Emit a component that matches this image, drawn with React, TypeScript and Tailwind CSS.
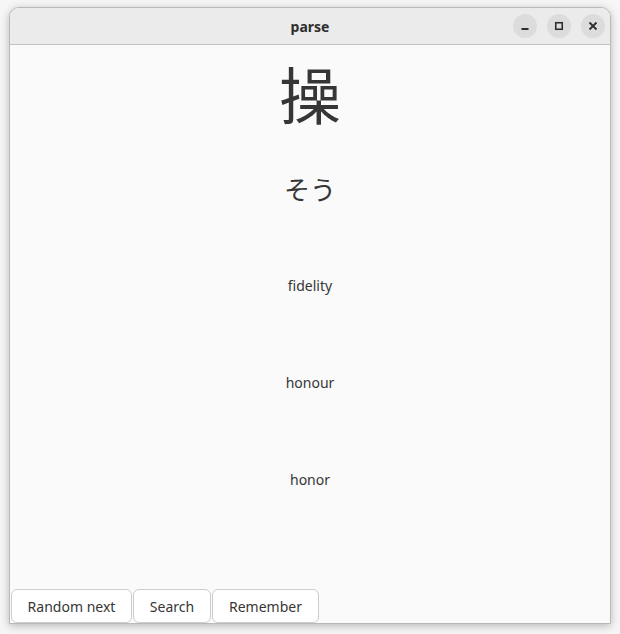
import React from "react";

const meanings = ["fidelity", "honour", "honor"];
const actions = [
  { label: "Random next", w: "w-[121px]" },
  { label: "Search", w: "w-[78px]" },
  { label: "Remember", w: "w-[107px]" },
];

export default function App() {
  return (
    <div className="w-[620px] h-[634px] bg-[#f6f6f6] pt-[7px] pl-[9px] font-['Noto_Sans','Noto_Sans_CJK_JP',sans-serif] text-[#363636]">
      <div className="w-[602px] h-[617px] flex flex-col bg-[#fafafa] rounded-t-[10px] border border-[#b9b9b9] shadow-[0_2px_8px_rgba(0,0,0,0.25)] overflow-hidden">
        {/* Title bar */}
        <div className="h-[37px] shrink-0 relative flex items-center justify-center bg-[#ebebeb] border-b border-[#c0c0c0]">
          <span className="text-[14px] font-bold text-[#2e2e2e]">parse</span>
          <div className="absolute right-[5px] top-[6px] flex gap-[10px]">
            <button className="w-[24px] h-[24px] rounded-full bg-[#dcdcdc] flex items-center justify-center">
              <svg width="10" height="10" viewBox="0 0 10 10">
                <rect x="1.5" y="7" width="7" height="2" fill="#2e2e2e" />
              </svg>
            </button>
            <button className="w-[24px] h-[24px] rounded-full bg-[#dcdcdc] flex items-center justify-center">
              <svg width="10" height="10" viewBox="0 0 10 10">
                <rect x="1.75" y="1.75" width="6.5" height="6.5" fill="none" stroke="#2e2e2e" strokeWidth="1.6" />
              </svg>
            </button>
            <button className="w-[24px] h-[24px] rounded-full bg-[#dcdcdc] flex items-center justify-center">
              <svg width="10" height="10" viewBox="0 0 10 10">
                <path d="M1.5 1.5 L8.5 8.5 M8.5 1.5 L1.5 8.5" stroke="#2e2e2e" strokeWidth="1.8" />
              </svg>
            </button>
          </div>
        </div>

        {/* Card */}
        <div className="flex-1 flex flex-col">
          <div className="h-[96px] flex items-center justify-center text-[62px] leading-none font-['Noto_Sans_CJK_JP',sans-serif]">
            操
          </div>
          <div className="h-[96px] flex items-center justify-center text-[26px] leading-none font-['Noto_Sans_CJK_JP',sans-serif]">
            そう
          </div>
          {meanings.map((m) => (
            <div key={m} className="h-[97px] flex items-center justify-center text-[14px]">
              {m}
            </div>
          ))}
        </div>

        {/* Actions */}
        <div className="flex gap-[1px] pl-[1px]">
          {actions.map((a) => (
            <button
              key={a.label}
              className={`${a.w} h-[34px] bg-white border border-[#cdcdcd] rounded-[6px] text-[14px] text-[#363636]`}
            >
              {a.label}
            </button>
          ))}
        </div>
      </div>
    </div>
  );
}
